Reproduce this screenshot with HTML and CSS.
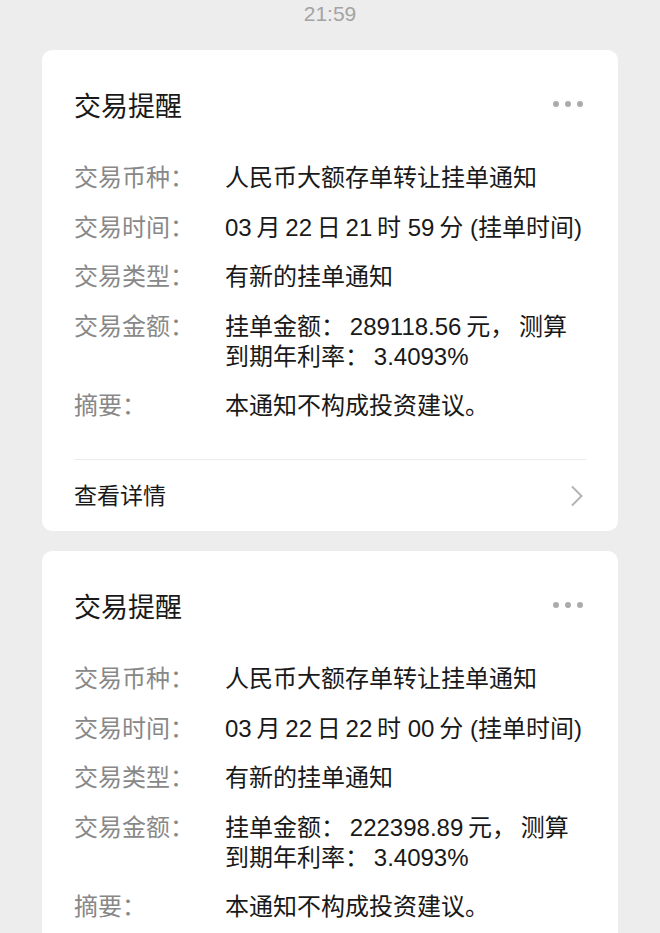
FILE: index.html
```html
<!DOCTYPE html>
<html lang="zh-CN">
<head>
  <meta charset="UTF-8" />
  <meta name="viewport" content="width=device-width, initial-scale=1" />
  <title>交易提醒</title>
  <link rel="stylesheet" href="styles.css">
</head>
<body>
  <div class="chat">
    <div class="time">21:59</div>

    <div class="card">
      <div class="card-head">
        <h2>交易提醒</h2>
        <span class="more"><i></i><i></i><i></i></span>
      </div>
      <div class="rows">
        <div class="row"><span class="label">交易币种：</span><span class="value">人民币大额存单转让挂单通知</span></div>
        <div class="row"><span class="label">交易时间：</span><span class="value">03&thinsp;月&thinsp;22&thinsp;日&thinsp;21&thinsp;时 59&thinsp;分 (挂单时间)</span></div>
        <div class="row"><span class="label">交易类型：</span><span class="value">有新的挂单通知</span></div>
        <div class="row"><span class="label">交易金额：</span><span class="value">挂单金额：&thinsp;289118.56&thinsp;元，&thinsp;测算<br>到期年利率：&thinsp;3.4093%</span></div>
        <div class="row"><span class="label">摘要：</span><span class="value">本通知不构成投资建议。</span></div>
      </div>
      <div class="card-foot">
        <span class="link">查看详情</span>
        <svg class="chev" width="14" height="22" viewBox="0 0 14 22"><path d="M2 1.5 L11.5 11 L2 20.5" fill="none" stroke="#b4b4b4" stroke-width="2"/></svg>
      </div>
    </div>

    <div class="card">
      <div class="card-head">
        <h2>交易提醒</h2>
        <span class="more"><i></i><i></i><i></i></span>
      </div>
      <div class="rows">
        <div class="row"><span class="label">交易币种：</span><span class="value">人民币大额存单转让挂单通知</span></div>
        <div class="row"><span class="label">交易时间：</span><span class="value">03&thinsp;月&thinsp;22&thinsp;日&thinsp;22&thinsp;时 00&thinsp;分 (挂单时间)</span></div>
        <div class="row"><span class="label">交易类型：</span><span class="value">有新的挂单通知</span></div>
        <div class="row"><span class="label">交易金额：</span><span class="value">挂单金额：&thinsp;222398.89&thinsp;元，&thinsp;测算<br>到期年利率：&thinsp;3.4093%</span></div>
        <div class="row"><span class="label">摘要：</span><span class="value">本通知不构成投资建议。</span></div>
      </div>
      <div class="card-foot">
        <span class="link">查看详情</span>
        <svg class="chev" width="14" height="22" viewBox="0 0 14 22"><path d="M2 1.5 L11.5 11 L2 20.5" fill="none" stroke="#b4b4b4" stroke-width="2"/></svg>
      </div>
    </div>
  </div>
</body>
</html>
```

FILE: styles.css
```css
* {
  margin: 0; padding: 0; box-sizing: border-box;
}
body {
  background: #ededed;
  font-family: "Liberation Sans", "Noto Sans CJK SC", sans-serif;
  color: #191919;
  overflow: hidden;
}
.chat {
  padding: 0 42px;
}
.time {
  text-align: center;
  font-size: 21px;
  line-height: 28px;
  color: #a3a3a3;
  margin-bottom: 22px;
}
.card {
  background: #fff;
  border-radius: 10px;
  padding: 40px 32px 0;
  margin-bottom: 20px;
}
.card-head {
  display: flex;
  justify-content: space-between;
  align-items: center;
  height: 34px;
}
.card-head h2 {
  font-size: 27px;
  font-weight: normal;
  line-height: 34px;
}
.more {
  display: flex;
  gap: 6px;
  margin-right: 3px;
  margin-top: -6px;
}
.more i {
  width: 6px;
  height: 6px;
  border-radius: 50%;
  background: #ababab;
}
.rows {
  padding: 39px 0 38px;
  display: flex;
  flex-direction: column;
  gap: 19.5px;
}
.row {
  display: flex;
  font-size: 24px;
  line-height: 30px;
}
.label {
  width: 151px;
  flex-shrink: 0;
  color: #888;
}
.value {
  color: #191919;
}
.card-foot {
  border-top: 1px solid #ececec;
  height: 72px;
  display: flex;
  align-items: center;
  justify-content: space-between;
  font-size: 23px;
}
.link {
  margin-top: -3px;
}
.chev {
  margin-right: 2px;
}
```
